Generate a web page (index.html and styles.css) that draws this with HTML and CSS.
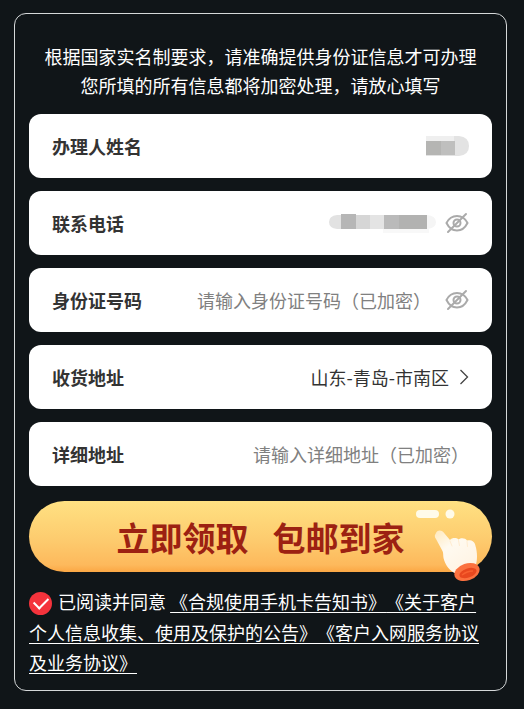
FILE: index.html
```
<!DOCTYPE html>
<html lang="zh-CN">
<head>
  <meta charset="UTF-8" />
  <meta name="viewport" content="width=device-width, initial-scale=1.0" />
  <title>立即领取 包邮到家</title>
  <link rel="stylesheet" href="styles.css">
</head>
<body>
  <form class="card">
    <p class="intro">根据国家实名制要求，请准确提供身份证信息才可办理<br>您所填的所有信息都将加密处理，请放心填写</p>

    <div class="fields">
      <div class="field">
        <span class="field-label">办理人姓名</span>
        <!-- valor oculto -->
        <svg class="mask" width="43" height="20" viewBox="0 0 43 20" role="img" aria-label="已隐藏">
          <path fill="#e3e3e3" d="M0 0h33q10 1 10 10t-10 10H0z"/>
          <path fill="#efefef" d="M0 0h28v5H0z"/>
          <path fill="#b5b5b3" d="M0 5h15v14H0z"/>
          <path fill="#bfbfbe" d="M15 5h14v14H15z"/>
        </svg>
      </div>

      <div class="field">
        <span class="field-label">联系电话</span>
        <svg class="mask mask-phone" width="108" height="20" viewBox="0 0 108 20" role="img" aria-label="已隐藏">
          <path fill="#f8f8f8" d="M54 16h46v4H54z"/>
          <path fill="#e2e2e2" d="M14 2H8Q0 3 0 9t8 7h6z"/>
          <path fill="#b6b6b6" d="M12 1h15v15H12z"/>
          <path fill="#d6d6d6" d="M27 2h14v14H27z"/>
          <path fill="#e4e4e4" d="M41 2h14v14H41z"/>
          <path fill="#bababa" d="M55 2h15v14H55z"/>
          <path fill="#b2b2b1" d="M70 2h28v14H70z"/>
          <path fill="#f5f5f5" d="M98 2q9 1 9 7t-9 7z"/>
        </svg>
        <button class="eye" type="button" aria-label="显示联系电话">
          <svg width="24" height="22" viewBox="0 0 24 22" fill="none" stroke="#aaa" stroke-width="2" stroke-linecap="round">
            <path d="M1.500 11C4 6 8 4 12 4s8 2 10.500 7C20 16 16 18.500 12 18.500S4 16 1.500 11z"/>
            <circle cx="12" cy="11" r="3.500"/>
            <path d="M21 2 3 20"/>
          </svg>
        </button>
      </div>

      <div class="field">
        <label class="field-label" for="idcard">身份证号码</label>
        <input id="idcard" type="text" placeholder="请输入身份证号码（已加密）">
        <button class="eye" type="button" aria-label="显示身份证号码">
          <svg width="24" height="22" viewBox="0 0 24 22" fill="none" stroke="#aaa" stroke-width="2" stroke-linecap="round">
            <path d="M1.500 11C4 6 8 4 12 4s8 2 10.500 7C20 16 16 18.500 12 18.500S4 16 1.500 11z"/>
            <circle cx="12" cy="11" r="3.500"/>
            <path d="M21 2 3 20"/>
          </svg>
        </button>
      </div>

      <div class="field">
        <label class="field-label" for="region">收货地址</label>
        <button id="region" class="region" type="button">
          山东-青岛-市南区
          <svg width="10" height="16" viewBox="0 0 10 16" fill="none" stroke="#444" stroke-width="1.300">
            <path d="M1.500 1 8.500 8l-7 7"/>
          </svg>
        </button>
      </div>

      <div class="field">
        <label class="field-label" for="address">详细地址</label>
        <input id="address" type="text" placeholder="请输入详细地址（已加密）">
      </div>
    </div>

    <button class="submit" type="submit">
      <span>立即领取</span>
      <span>包邮到家</span>
      <svg class="shine" width="40" height="10" viewBox="0 0 40 10" fill="#fffbe9">
        <rect x="0" y="1" width="23" height="8" rx="4"/>
        <circle cx="34" cy="5" r="4.500"/>
      </svg>
      <svg class="hand" width="50" height="54" viewBox="0 0 50 54">
        <defs>
          <linearGradient id="skin" x1="0" y1="0" x2="0.700" y2="1">
            <stop offset="0" stop-color="#ffe9bd"/>
            <stop offset="0.400" stop-color="#fffaf0"/>
            <stop offset="1" stop-color="#fff3e3"/>
          </linearGradient>
        </defs>
        <path fill="url(#skin)" d="M1.500 4C3-.500 8-.500 10.500 3.500L16 10c2-2.500 6.500-2.500 8.500-.500 2.500-2 7-1.500 8.500 1 4-1 8 1 8.500 5.500 2 7 2 14 0 20L23 44c-7-2.500-12-9-13.500-16-.500-3 0-5-1-7L2 9C.500 7 .500 5.500 1.500 4z"/>
        <path fill="none" stroke="#ffecd0" stroke-width="1" stroke-linecap="round" d="M16 11l2 5M24.500 10.500l1 5M33 11.500l.500 5"/>
        <ellipse cx="33" cy="42" rx="13" ry="8.500" transform="rotate(-19 33 42)" fill="#fb713f"/>
        <ellipse cx="34" cy="43" rx="9" ry="4.500" transform="rotate(-19 34 43)" fill="#e8481f"/>
        <path fill="none" stroke="#f7602f" stroke-width="1.500" d="M28 45q5-4 11-4"/>
      </svg>
    </button>

    <div class="agree">
      <input id="agree" type="checkbox" checked>
      <label for="agree">已阅读并同意</label>
      <a href="#">《合规使用手机卡告知书》</a><a href="#">《关于客户个人信息收集、使用及保护的公告》</a><a href="#">《客户入网服务协议及业务协议》</a>
    </div>
  </form>
</body>
</html>
```

FILE: styles.css
```
* {
  box-sizing: border-box;
  margin: 0;
  padding: 0;
  font-family: 'Noto Sans CJK SC', sans-serif;
  text-spacing-trim: space-all;
}

body {
  background: #101518;
  color: #fff;
  font-size: 18px;
  padding: 13px 17px 18px 14px;
}

button {
  border: none;
  background: none;
  cursor: pointer;
}

.card {
  border: 1px solid #d5d8d9;
  border-radius: 12px;
  padding: 28px 14px 13px;
}

.intro {
  line-height: 29px;
  text-align: center;
  margin-bottom: 14px;
}

.fields {
  display: flex;
  flex-direction: column;
  gap: 13px;
}

.field {
  display: flex;
  align-items: center;
  height: 64px;
  padding: 0 23px;
  border-radius: 12px;
  background-color: #fff;
  color: #333;
}

.field-label {
  flex: none;
  font-weight: bold;
}

.field input {
  flex: 1;
  min-width: 0;
  height: 40px;
  border: none;
  outline: none;
  background: none;
  color: #333;
  font-size: 18px;
  text-align: right;
}

.field input::placeholder {
  color: #808080;
}

.mask {
  margin-left: auto;
}

.eye {
  display: flex;
  margin-left: 14px;
}

.mask-phone + .eye {
  margin-left: 8px;
}

.region {
  display: flex;
  align-items: center;
  gap: 10px;
  margin-left: auto;
  color: #333;
  font-size: 18px;
}

.submit {
  position: relative;
  display: flex;
  align-items: center;
  justify-content: center;
  gap: 24px;
  width: 100%;
  height: 71px;
  margin: 15px 0 14px;
  border-radius: 36px;
  background: linear-gradient(#ffe182, #fdcb6e 55%, #fdb95c 90%, #fba744);
  color: #9c2112;
  font-size: 33px;
  font-weight: bold;
  line-height: 40px;
}

/* adornos sobre el boton */
.shine {
  position: absolute;
  top: 8px;
  right: 36px;
}

.hand {
  position: absolute;
  right: 8px;
  bottom: -12px;
}

.agree {
  line-height: 30px;
}

.agree input {
  appearance: none;
  display: inline-grid;
  place-items: center;
  width: 23px;
  height: 23px;
  margin: 0 2px 2px 0;
  border-radius: 50%;
  background-color: #555;
  vertical-align: middle;
}

.agree input:checked {
  background-color: #f4333c;
}

.agree input:checked::before {
  content: '';
  width: 12px;
  height: 7px;
  margin-bottom: 4px;
  border-left: 2px solid #fff;
  border-bottom: 2px solid #fff;
  transform: rotate(-45deg);
}

.agree a {
  color: #fff;
  text-decoration: underline;
  text-underline-offset: 3px;
}
```
